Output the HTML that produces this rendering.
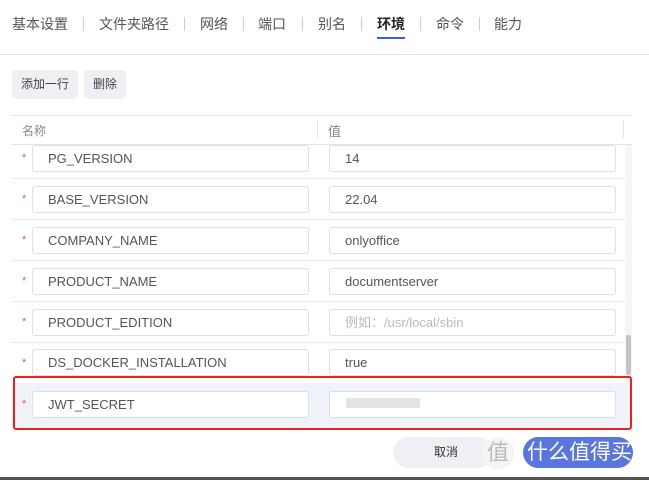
<!DOCTYPE html>
<html><head><meta charset="utf-8"><style>
*{margin:0;padding:0;box-sizing:border-box}
body{width:649px;height:480px;overflow:hidden;background:#fff;font-family:"Liberation Sans","Noto Sans CJK SC",sans-serif;position:relative;color:#333}
.a{position:absolute}
.tab{position:absolute;top:15px;font-size:14px;color:#555;line-height:18px}
.sep{position:absolute;top:17px;width:1px;height:14px;background:#ccc}
.btn{position:absolute;top:70px;height:29px;background:#eef0f4;border-radius:4px;font-size:12px;line-height:29px;text-align:center;color:#444}
.inp{position:absolute;height:27px;border:1px solid #dcdfe6;border-radius:3px;background:#fff;font-size:13px;line-height:25px;padding-left:15px;color:#555}
.star{position:absolute;left:22px;color:#e55;font-size:11px}
.line{position:absolute;left:12px;width:613px;height:1px;background:#e6e8ec}
</style></head><body>
<div class="tab" style="left:12px">基本设置</div><div class="sep" style="left:83px"></div>
<div class="tab" style="left:99px">文件夹路径</div><div class="sep" style="left:184px"></div>
<div class="tab" style="left:200px">网络</div><div class="sep" style="left:243px"></div>
<div class="tab" style="left:258px">端口</div><div class="sep" style="left:302px"></div>
<div class="tab" style="left:318px">别名</div><div class="sep" style="left:361px"></div>
<div class="tab" style="left:377px;color:#222;font-weight:bold">环境</div><div class="sep" style="left:420px"></div>
<div class="tab" style="left:436px">命令</div><div class="sep" style="left:479px"></div>
<div class="tab" style="left:494px">能力</div>
<div class="a" style="left:377px;top:37px;width:28px;height:2px;background:#3d5cf0"></div>
<div class="a" style="left:0;top:54px;width:649px;height:1px;background:#e2e4e8"></div>
<div class="btn" style="left:12px;width:66px">添加一行</div>
<div class="btn" style="left:84px;width:42px">删除</div>
<div class="a" style="left:12px;top:115px;width:620px;height:1px;background:#e2e4e8"></div>
<div class="a" style="left:22px;top:122px;font-size:12px;color:#888">名称</div>
<div class="a" style="left:317px;top:120px;width:1px;height:18px;background:#e2e4e8"></div>
<div class="a" style="left:328px;top:121px;font-size:13px;color:#888">值</div>
<div class="a" style="left:623px;top:120px;width:1px;height:18px;background:#e2e4e8"></div>
<div class="a" style="left:12px;top:144px;width:620px;height:1px;background:#e2e4e8"></div>
<div class="a" style="left:625px;top:145px;width:7px;height:283px;background:#f5f5f7"></div>
<div class="a" style="left:626px;top:335px;width:5px;height:40px;background:#c4c4c4;border-radius:2px"></div>
<div class="a" style="left:12px;top:383px;width:613px;height:45px;background:#f0f2f9"></div>

<div class="star" style="top:152px">*</div><div class="inp" style="left:32px;top:145px;width:277px">PG_VERSION</div><div class="inp" style="left:329px;top:145px;width:287px">14</div><div class="line" style="top:178px"></div>
<div class="star" style="top:193px">*</div><div class="inp" style="left:32px;top:186px;width:277px">BASE_VERSION</div><div class="inp" style="left:329px;top:186px;width:287px">22.04</div><div class="line" style="top:219px"></div>
<div class="star" style="top:234px">*</div><div class="inp" style="left:32px;top:227px;width:277px">COMPANY_NAME</div><div class="inp" style="left:329px;top:227px;width:287px">onlyoffice</div><div class="line" style="top:260px"></div>
<div class="star" style="top:275px">*</div><div class="inp" style="left:32px;top:268px;width:277px">PRODUCT_NAME</div><div class="inp" style="left:329px;top:268px;width:287px">documentserver</div><div class="line" style="top:301px"></div>
<div class="star" style="top:316px">*</div><div class="inp" style="left:32px;top:309px;width:277px">PRODUCT_EDITION</div><div class="inp" style="left:329px;top:309px;width:287px;color:#bbb">例如：/usr/local/sbin</div><div class="line" style="top:342px"></div>
<div class="star" style="top:357px">*</div><div class="inp" style="left:32px;top:349px;width:277px">DS_DOCKER_INSTALLATION</div><div class="inp" style="left:329px;top:349px;width:287px">true</div>
<div class="star" style="top:398px">*</div><div class="inp" style="left:32px;top:391px;width:277px">JWT_SECRET</div><div class="inp" style="left:329px;top:391px;width:287px"></div>
<div class="a" style="left:346px;top:398px;width:74px;height:10px;background:#ddd;opacity:.8"></div>
<div class="a" style="left:13px;top:376px;width:619px;height:54px;border:2px solid #f02020;border-radius:3px"></div>

<div class="a" style="left:393px;top:437px;width:100px;height:31px;background:#eef0f4;border-radius:16px;font-size:12px;line-height:31px;padding-left:41px;color:#333">取消</div>
<div class="a" style="left:482px;top:437px;width:32px;height:32px;border-radius:16px;background:#f4f4f4;color:#bbb;font-size:22px;line-height:32px;text-align:center">值</div>
<div class="a" style="left:523px;top:437px;width:110px;height:31px;background:#5876de;border-radius:16px;color:#fff;font-size:21px;line-height:31px;padding-left:4px;white-space:nowrap;overflow:hidden">什么值得买</div>
<div class="a" style="left:0;top:477px;width:649px;height:3px;background:#555"></div>
</body></html>
